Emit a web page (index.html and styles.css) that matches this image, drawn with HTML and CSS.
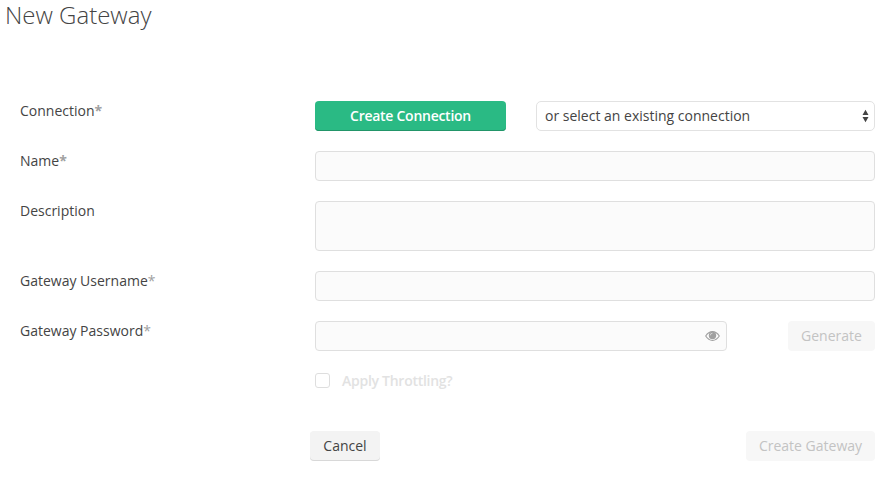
FILE: index.html
```html
<!DOCTYPE html>
<html lang="en">
<head>
<meta charset="utf-8">
<title>New Gateway</title>
<link rel="stylesheet" href="styles.css">
</head>
<body>
<h1 class="title">New Gateway</h1>
<form class="form">
  <div class="row">
    <label class="label">Connection<b class="req">*</b></label>
    <div class="controls connection">
      <button type="button" class="btn btn-primary">Create Connection</button>
      <div class="select" role="combobox" aria-expanded="false" tabindex="0">
        <span>or select an existing connection</span>
        <svg class="arrows" width="7" height="14" viewBox="0 0 7 14"><path d="M3.500 .8 6.500 6h-6zM3.500 13.200l-3-5.200h6z" fill="#444"/></svg>
      </div>
    </div>
  </div>
  <div class="row">
    <label class="label" for="name">Name<b class="req">*</b></label>
    <div class="controls"><input class="input" id="name" type="text"></div>
  </div>
  <div class="row">
    <label class="label" for="description">Description</label>
    <div class="controls"><textarea class="input area" id="description"></textarea></div>
  </div>
  <div class="row">
    <label class="label" for="username">Gateway Username<span class="req">*</span></label>
    <div class="controls"><input class="input" id="username" type="text"></div>
  </div>
  <div class="row">
    <label class="label">Gateway Password<span class="req">*</span></label>
    <div class="controls password">
      <div class="input password-box">
        <svg class="eye" width="15" height="10" viewBox="0 0 15 10"><path d="M.7 5Q3.500.6 7.500.6T14.300 5Q11.500 9.400 7.500 9.400T.7 5Z" fill="none" stroke="#a0a0a0" stroke-width="1.100"/><circle cx="7.500" cy="4.400" r="3.700" fill="#a0a0a0"/><path d="M5.300 4.400a2.200 2.200 0 0 1 2.200-2.200" fill="none" stroke="#e8e8e8" stroke-width=".7"/></svg>
      </div>
      <button type="button" class="btn btn-disabled generate" disabled>Generate</button>
    </div>
  </div>
  <div class="throttle"><span class="checkbox"></span><span>Apply Throttling?</span></div>
  <div class="actions">
    <button type="button" class="btn btn-cancel">Cancel</button>
    <button type="button" class="btn btn-disabled create" disabled>Create Gateway</button>
  </div>
</form>
</body>
</html>
```
FILE: styles.css
```css
* { box-sizing: border-box; }
body {
  margin: 0;
  height: 481px;
  overflow: hidden;
  background: #fff;
  color: #444;
  font: 14px/20px "Open Sans", sans-serif;
}
.title {
  margin: 0;
  padding-left: 5px;
  height: 101px;
  font-size: 24px;
  font-weight: 300;
  line-height: 29px;
}
.form { width: 855px; margin-left: 20px; }
.row { display: flex; margin-bottom: 20px; }
.label { width: 295px; flex: none; }
.req { color: #a0a0a0; }
.controls { flex: 1; display: flex; }
.connection { gap: 30px; }
.input {
  display: block;
  width: 100%;
  height: 30px;
  margin: 0;
  padding: 4px 9px;
  border: 1px solid #dfdfdf;
  border-radius: 4px;
  background: #fbfbfb;
  font: inherit;
  color: inherit;
  outline: 0;
}
.area { height: 50px; resize: none; }
.btn {
  height: 30px;
  margin: 0;
  padding: 0;
  border: 0;
  border-radius: 4px;
  font: inherit;
  line-height: 30px;
  text-align: center;
}
.btn-primary {
  width: 191px;
  background: #2aba84;
  box-shadow: inset 0 -1px #229569;
  color: #fff;
  font-weight: 600;
  letter-spacing: -.27px;
}
.select {
  flex: 1;
  height: 30px;
  display: flex;
  align-items: center;
  justify-content: space-between;
  padding: 0 5px 0 8px;
  border: 1px solid #e2e2e2;
  border-radius: 5px;
}
.password { justify-content: space-between; }
.password-box {
  width: 412px;
  display: flex;
  align-items: center;
  justify-content: flex-end;
  padding: 0 6px;
}
.btn-disabled { background: #f7f7f7; color: #c3c3c3; }
.generate { width: 87px; }
.create { width: 129px; }
.throttle {
  display: flex;
  align-items: center;
  gap: 12px;
  margin-left: 295px;
  color: #e2e2e2;
  font-weight: 600;
  letter-spacing: -.27px;
}
.checkbox { width: 15px; height: 15px; margin-bottom: 1px; border: 1px solid #dedede; border-radius: 3px; }
.actions {
  display: flex;
  justify-content: space-between;
  margin: 40px 0 0 290px;
}
.btn-cancel {
  width: 70px;
  background: #f3f3f3;
  box-shadow: inset 0 -1px #d8d8d8;
  color: #444;
}
```
